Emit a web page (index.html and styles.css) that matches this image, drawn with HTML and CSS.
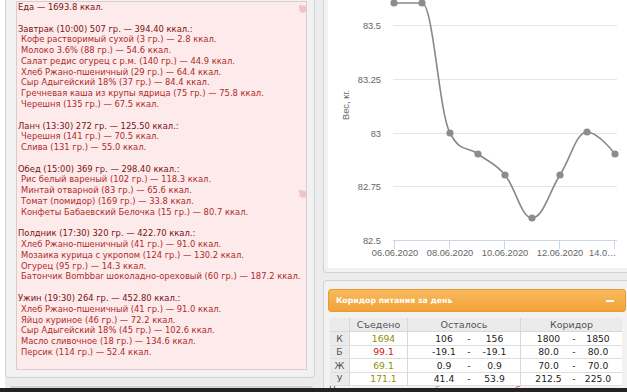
FILE: index.html
```html
<!DOCTYPE html>
<html lang="ru">

<head>
  <meta charset="UTF-8">
  <title>Дневник питания</title>
  <link rel="stylesheet" href="styles.css">
</head>

<body>
  <div class="screen">
    <div class="page">

      <!-- Left column: food log -->
      <div class="col-left">
        <div class="well well-food">
          <div class="food">
            <svg class="pin pin-top" width="9" height="9" viewBox="0 0 9 9">
              <circle cx="5" cy="5.2" r="3.6" fill="#f1c3c3" />
              <circle cx="2.4" cy="2.4" r="1.6" fill="#f1c3c3" />
            </svg>
            <svg class="pin pin-mid" width="9" height="9" viewBox="0 0 9 9">
              <circle cx="5" cy="5.2" r="3.6" fill="#f1c3c3" />
              <circle cx="2.4" cy="2.4" r="1.6" fill="#f1c3c3" />
            </svg>

            <div class="meal-head">Еда — 1693.8 ккал.</div>

            <div class="meal">
              <div class="meal-head">Завтрак (10:00) 507 гр. — 394.40 ккал.:</div>
              <div class="meal-item">Кофе растворимый сухой (3 гр.) — 2.8 ккал.</div>
              <div class="meal-item">Молоко 3.6% (88 гр.) — 54.6 ккал.</div>
              <div class="meal-item">Салат редис огурец с р.м. (140 гр.) — 44.9 ккал.</div>
              <div class="meal-item">Хлеб Ржано-пшеничный (29 гр.) — 64.4 ккал.</div>
              <div class="meal-item">Сыр Адыгейский 18% (37 гр.) — 84.4 ккал.</div>
              <div class="meal-item">Гречневая каша из крупы ядрица (75 гр.) — 75.8 ккал.</div>
              <div class="meal-item">Черешня (135 гр.) — 67.5 ккал.</div>
            </div>

            <div class="meal">
              <div class="meal-head">Ланч (13:30) 272 гр. — 125.50 ккал.:</div>
              <div class="meal-item">Черешня (141 гр.) — 70.5 ккал.</div>
              <div class="meal-item">Слива (131 гр.) — 55.0 ккал.</div>
            </div>

            <div class="meal">
              <div class="meal-head">Обед (15:00) 369 гр. — 298.40 ккал.:</div>
              <div class="meal-item">Рис белый вареный (102 гр.) — 118.3 ккал.</div>
              <div class="meal-item">Минтай отварной (83 гр.) — 65.6 ккал.</div>
              <div class="meal-item">Томат (помидор) (169 гр.) — 33.8 ккал.</div>
              <div class="meal-item">Конфеты Бабаевский Белочка (15 гр.) — 80.7 ккал.</div>
            </div>

            <div class="meal">
              <div class="meal-head">Полдник (17:30) 320 гр. — 422.70 ккал.:</div>
              <div class="meal-item">Хлеб Ржано-пшеничный (41 гр.) — 91.0 ккал.</div>
              <div class="meal-item">Мозаика курица с укропом (124 гр.) — 130.2 ккал.</div>
              <div class="meal-item">Огурец (95 гр.) — 14.3 ккал.</div>
              <div class="meal-item">Батончик Bombbar шоколадно-ореховый (60 гр.) — 187.2 ккал.</div>
            </div>

            <div class="meal">
              <div class="meal-head">Ужин (19:30) 264 гр. — 452.80 ккал.:</div>
              <div class="meal-item">Хлеб Ржано-пшеничный (41 гр.) — 91.0 ккал.</div>
              <div class="meal-item">Яйцо куриное (46 гр.) — 72.2 ккал.</div>
              <div class="meal-item">Сыр Адыгейский 18% (45 гр.) — 102.6 ккал.</div>
              <div class="meal-item">Масло сливочное (18 гр.) — 134.6 ккал.</div>
              <div class="meal-item">Персик (114 гр.) — 52.4 ккал.</div>
            </div>
          </div>
        </div>
        <div class="panel-next"></div>
      </div>

      <!-- Right column: weight chart + corridor -->
      <div class="col-right">
        <div class="well well-chart">
          <div class="chart">
            <svg width="299" height="268" viewBox="0 0 299 268">
              <g stroke="#e6e6e6" stroke-width="1">
                <line x1="65" y1="25.5" x2="289" y2="25.5" />
                <line x1="65" y1="79.5" x2="289" y2="79.5" />
                <line x1="65" y1="133.5" x2="289" y2="133.5" />
                <line x1="65" y1="186.5" x2="289" y2="186.5" />
              </g>
              <g stroke="#ccd6eb" stroke-width="1">
                <line x1="65" y1="240.5" x2="289" y2="240.5" />
                <line x1="66.5" y1="240" x2="66.5" y2="249" />
                <line x1="121.5" y1="240" x2="121.5" y2="249" />
                <line x1="176.5" y1="240" x2="176.5" y2="249" />
                <line x1="231.5" y1="240" x2="231.5" y2="249" />
                <line x1="286.5" y1="240" x2="286.5" y2="249" />
              </g>
              <g class="axis-label" text-anchor="end">
                <text x="53" y="29">83.5</text>
                <text x="53" y="83">83.25</text>
                <text x="53" y="137">83</text>
                <text x="53" y="190">82.75</text>
                <text x="53" y="244">82.5</text>
              </g>
              <g class="axis-label" text-anchor="middle">
                <text x="67" y="256">06.06.2020</text>
                <text x="122" y="256">08.06.2020</text>
                <text x="177" y="256">10.06.2020</text>
                <text x="232" y="256">12.06.2020</text>
              </g>
              <text class="axis-label" x="261" y="256">14.0…</text>
              <text class="axis-label" transform="translate(21,105) rotate(-90)" text-anchor="middle">Вес, кг.</text>
              <path fill="none" stroke="#888" stroke-width="1.6"
                d="M66 3 C66 3 82.8 3 94 3 C105.2 3 110.8 112 122 133 C133.2 154 138.8 145.4 150 154 C160.8 162.3 166.2 162.2 177 175 C187.8 187.8 193.2 218 204 218 C215.2 218 220.8 192.5 232 175 C242.8 158.1 248.2 132 259 132 C270.2 132 287 154 287 154" />
              <g fill="#8c8c8c">
                <circle cx="66" cy="3" r="3.6" />
                <circle cx="94" cy="3" r="3.6" />
                <circle cx="122" cy="133" r="3.6" />
                <circle cx="150" cy="154" r="3.6" />
                <circle cx="177" cy="175" r="3.6" />
                <circle cx="204" cy="218" r="3.6" />
                <circle cx="232" cy="175" r="3.6" />
                <circle cx="259" cy="132" r="3.6" />
                <circle cx="287" cy="154" r="3.6" />
              </g>
            </svg>
          </div>
        </div>

        <div class="well well-corridor">
          <div class="corridor-head">
            <span>Коридор питания за день</span>
            <span class="collapse"></span>
          </div>

          <div class="corridor">
            <div class="cell head letter"></div>
            <div class="cell head sep">Съедено</div>
            <div class="cell head span3 sep">Осталось</div>
            <div class="cell head span3">Коридор</div>

            <div class="cell letter">К</div>
            <div class="cell eaten sep under">1694</div>
            <div class="cell rem1">106</div>
            <div class="cell dash">-</div>
            <div class="cell rem2 sep">156</div>
            <div class="cell cor1">1800</div>
            <div class="cell dash">-</div>
            <div class="cell cor2">1850</div>

            <div class="cell letter">Б</div>
            <div class="cell eaten sep over">99.1</div>
            <div class="cell rem1">-19.1</div>
            <div class="cell dash">-</div>
            <div class="cell rem2 sep">-19.1</div>
            <div class="cell cor1">80.0</div>
            <div class="cell dash">-</div>
            <div class="cell cor2">80.0</div>

            <div class="cell letter">Ж</div>
            <div class="cell eaten sep under">69.1</div>
            <div class="cell rem1">0.9</div>
            <div class="cell dash">-</div>
            <div class="cell rem2 sep">0.9</div>
            <div class="cell cor1">70.0</div>
            <div class="cell dash">-</div>
            <div class="cell cor2">70.0</div>

            <div class="cell letter">У</div>
            <div class="cell eaten sep under">171.1</div>
            <div class="cell rem1">41.4</div>
            <div class="cell dash">-</div>
            <div class="cell rem2 sep">53.9</div>
            <div class="cell cor1">212.5</div>
            <div class="cell dash">-</div>
            <div class="cell cor2">225.0</div>
          </div>

          <p class="legend">Цвета означают: <span class="under">недобор</span>, <span class="norm">норма</span>, <span class="over">перебор</span></p>
        </div>
      </div>
    </div>

    <div class="taskbar"></div>
  </div>
</body>

</html>
```

FILE: styles.css
```css
body {
  margin: 0;
  padding: 0;
  background-color: #fff;
  font-family: "DejaVu Sans", "Liberation Sans", sans-serif;
}

.screen {
  width: 627px;
  height: 392px;
  display: flex;
  flex-direction: column;
  overflow: hidden;
}

.page {
  height: 388px;
  display: flex;
  overflow: hidden;
  border-left: 5px solid #fff;
  background-color: #ececec;
}

/* Left column */

.col-left {
  width: 310px;
  flex-shrink: 0;
  display: flex;
  flex-direction: column;
}

.well {
  background-color: #f2f2f2;
  border: 1px solid #d2d2d2;
  box-sizing: border-box;
}

.well-food {
  border-top: none;
  border-radius: 0 0 4px 4px;
  padding: 1px 7px 7px 10px;
}

.food {
  position: relative;
  height: 369px;
  box-sizing: border-box;
  padding-left: 1px;
  background-color: #fdeaea;
  border: 1px solid #d9cccc;
  font-size: 8.4px;
  line-height: 10.78px;
  color: #b02a2a;
  white-space: nowrap;
}

.meal {
  margin-top: 10.78px;
}

.meal-head {
  color: #7a1414;
}

.meal-item {
  padding-left: 3px;
}

.pin {
  position: absolute;
  left: 281px;
  display: block;
}

.pin-top {
  top: 2px;
}

.pin-mid {
  top: 187px;
}

.panel-next {
  margin: 8px 2px 0 5px;
  height: 20px;
  background-color: #fff;
  border: 1px solid #d2d2d2;
  border-radius: 4px;
}

/* Right column */

.col-right {
  flex: 1;
  display: flex;
  flex-direction: column;
}

.well-chart {
  margin-left: 8px;
  border-top: none;
  border-right: none;
  border-radius: 0 0 0 4px;
  padding: 0 0 4px 4px;
}

.chart {
  height: 268px;
  background-color: #fff;
}

.chart svg {
  display: block;
}

.axis-label {
  font-family: "Liberation Sans", Arial, sans-serif;
  font-size: 9.3px;
  fill: #666;
}

.well-corridor {
  margin: 7px 0 0 8px;
  border-right: none;
  border-bottom: none;
  border-radius: 4px 0 0 0;
  padding: 8px 0 0 4px;
  flex: 1;
}

.corridor-head {
  height: 23px;
  margin-right: 1px;
  box-sizing: border-box;
  display: flex;
  align-items: center;
  justify-content: space-between;
  padding: 0 11px 0 7px;
  background: linear-gradient(#f9ba5c, #f3a23a);
  border: 1px solid #eb9b34;
  border-radius: 3px;
  color: #fff;
  font-size: 7.8px;
  font-weight: bold;
}

.collapse {
  width: 8px;
  height: 2px;
  background-color: #fff;
}

.corridor {
  margin: 6px 5px 0 2px;
  display: grid;
  grid-template-columns: 20px 58px 54px 14px 45px 46px 14px 41px;
  grid-template-rows: 14px repeat(4, 13.5px);
  font-size: 9.2px;
  color: #222;
}

.cell {
  display: flex;
  align-items: center;
  justify-content: center;
  box-sizing: border-box;
  background-color: #fff;
  border-bottom: 1px solid #dedede;
}

.cell.head {
  background-color: #ebebeb;
  color: #555;
  font-size: 9.5px;
  border-bottom-color: #d8d8d8;
}

.cell.letter {
  background-color: #ebebeb;
  color: #555;
  border-right: 1px solid #d8d8d8;
}

.cell.sep {
  border-right: 1px solid #d8d8d8;
}

.span3 {
  grid-column: span 3;
}

.eaten {
  padding-left: 10px;
}

.rem1 {
  padding-left: 18px;
}

.rem2 {
  padding-right: 7px;
}

.cor1 {
  padding-left: 9px;
}

.cor2 {
  padding-right: 7px;
}

.under {
  color: #8f8f00;
}

.norm {
  color: #2a9a2a;
}

.over {
  color: #d01010;
}

.legend {
  margin: 0 0 0 1px;
  font-size: 9px;
  line-height: 8px;
  color: #555;
  white-space: nowrap;
}

.taskbar {
  height: 4px;
  background-color: #232323;
}
```
